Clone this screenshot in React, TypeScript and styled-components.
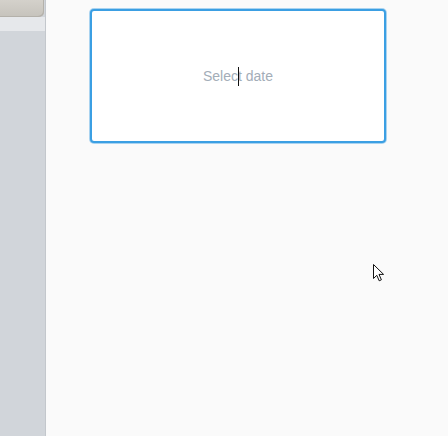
import styled, { createGlobalStyle } from "styled-components";

const GlobalStyle = createGlobalStyle`
  html, body {
    margin: 0;
    padding: 0;
    background: #fafafa;
    font-family: "Liberation Sans", Arial, sans-serif;
  }
`;

const Page = styled.div`
  display: flex;
  width: 448px;
  height: 436px;
  overflow: hidden;
  position: relative;
`;

const Sidebar = styled.aside`
  width: 45px;
  flex-shrink: 0;
  display: flex;
  flex-direction: column;
  background: #d1d5da;
  border-right: 1px solid #c3c7cc;
`;

const SidebarTab = styled.div`
  height: 17px;
  width: 44px;
  background: linear-gradient(180deg, #d4d1cb 0%, #c6c3bc 100%);
  border-bottom-right-radius: 5px;
  box-shadow: inset -1px -1px 0 #b4b1aa;
`;

const SidebarStrip = styled.div`
  height: 14px;
  background: #e6e8eb;
`;

const Main = styled.main`
  flex: 1;
  padding: 9px 0 0 44px;
`;

const DateField = styled.div`
  position: relative;
  width: 296px;
  height: 134px;
  box-sizing: border-box;
  border: 2px solid #3b9fe3;
  border-radius: 4px;
  background: #fff;
  box-shadow: 0 0 0 1px #a9d3f0;
  display: flex;
  align-items: center;
  justify-content: center;
`;

const DateInput = styled.input`
  width: 100%;
  border: none;
  outline: none;
  background: transparent;
  text-align: center;
  font-family: "Liberation Sans", Arial, sans-serif;
  font-size: 14px;
  color: #333;
  padding: 0;
  margin-top: -1px;

  &::placeholder {
    color: #a3adb8;
  }
`;

const Caret = styled.span`
  position: absolute;
  left: 146px;
  top: 56px;
  width: 1px;
  height: 19px;
  background: #111;
`;

const Pointer = styled.svg`
  position: absolute;
  left: 372px;
  top: 263px;
`;

export default function App() {
  return (
    <>
      <GlobalStyle />
      <Page>
        <Sidebar>
          <SidebarTab />
          <SidebarStrip />
        </Sidebar>
        <Main>
          <DateField>
            <DateInput placeholder="Select date" readOnly />
            <Caret />
          </DateField>
        </Main>
        <Pointer width="14" height="20" viewBox="0 0 14 20">
          <path
            d="M1.5 1.5 L1.5 15.5 L4.8 12.3 L7.2 17.8 L9.4 16.8 L7 11.4 L11.6 11.4 Z"
            fill="#fff"
            stroke="#111"
            strokeWidth="1"
            strokeLinejoin="miter"
          />
        </Pointer>
      </Page>
    </>
  );
}
